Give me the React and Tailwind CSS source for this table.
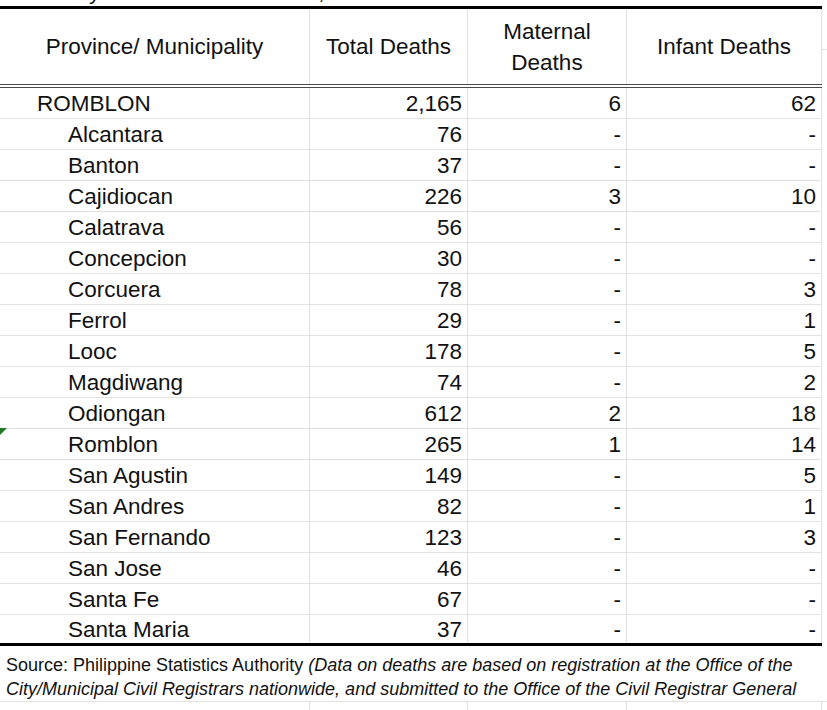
const ROWS = [
  { name: "ROMBLON", total: "2,165", maternal: "6", infant: "62", top: true },
  { name: "Alcantara", total: "76", maternal: "-", infant: "-" },
  { name: "Banton", total: "37", maternal: "-", infant: "-" },
  { name: "Cajidiocan", total: "226", maternal: "3", infant: "10" },
  { name: "Calatrava", total: "56", maternal: "-", infant: "-" },
  { name: "Concepcion", total: "30", maternal: "-", infant: "-" },
  { name: "Corcuera", total: "78", maternal: "-", infant: "3" },
  { name: "Ferrol", total: "29", maternal: "-", infant: "1" },
  { name: "Looc", total: "178", maternal: "-", infant: "5" },
  { name: "Magdiwang", total: "74", maternal: "-", infant: "2" },
  { name: "Odiongan", total: "612", maternal: "2", infant: "18" },
  { name: "Romblon", total: "265", maternal: "1", infant: "14", flag: true },
  { name: "San Agustin", total: "149", maternal: "-", infant: "5" },
  { name: "San Andres", total: "82", maternal: "-", infant: "1" },
  { name: "San Fernando", total: "123", maternal: "-", infant: "3" },
  { name: "San Jose", total: "46", maternal: "-", infant: "-" },
  { name: "Santa Fe", total: "67", maternal: "-", infant: "-" },
  { name: "Santa Maria", total: "37", maternal: "-", infant: "-" },
];

function DataRow({ row, last }) {
  return (
    <div className={`relative flex ${last ? "h-[28px]" : "h-[31px] border-b border-[#e2e2e2]"}`}>
      {row.flag ? (
        <span className="absolute left-0 top-[-1px] h-0 w-0 border-r-[7px] border-t-[7px] border-r-transparent border-t-[#1e7b22]" />
      ) : null}
      <div className={`flex w-[310px] items-center border-r border-[#e2e2e2] pt-[2px] ${row.top ? "pl-[37px]" : "pl-[68px]"}`}>
        {row.name}
      </div>
      <div className="flex w-[158px] items-center justify-end border-r border-[#e2e2e2] pr-[5px] pt-[2px]">{row.total}</div>
      <div className="flex w-[159px] items-center justify-end border-r border-[#e2e2e2] pr-[5px] pt-[2px]">{row.maternal}</div>
      <div className="flex w-[195px] items-center justify-end border-r border-[#e2e2e2] pr-[5px] pt-[2px]">{row.infant}</div>
    </div>
  );
}

export default function App() {
  return (
    <div className="h-[710px] w-[827px] overflow-hidden bg-white font-['Liberation_Sans',Arial,sans-serif] text-[22.5px] leading-none text-[#111]">
      {/* title row above, mostly cropped off */}
      <div className="flex h-[6px] overflow-hidden">
        <span className="ml-[89px] mt-[-19px]">y</span>
        <span className="ml-[218px] mt-[-19px]">,</span>
      </div>
      <div className="h-[3px] w-[822px] bg-black" />

      {/* header */}
      <div className="flex h-[75px] w-[827px]">
        <div className="flex w-[310px] items-center justify-center border-r border-[#e2e2e2] pt-[2px]">Province/ Municipality</div>
        <div className="flex w-[158px] items-center justify-center border-r border-[#e2e2e2] pt-[2px]">Total Deaths</div>
        <div className="flex w-[159px] flex-col items-center justify-center gap-[9px] border-r border-[#e2e2e2] pt-[2px]">
          <span>Maternal</span>
          <span>Deaths</span>
        </div>
        <div className="flex w-[195px] items-center justify-center border-r border-[#e2e2e2] pt-[2px]">Infant Deaths</div>
        <div className="flex-1">
          <div className="h-[41px] border-b border-[#e2e2e2]" />
        </div>
      </div>
      <div className="h-[4px] w-[822px] border-y border-[#4a4a4a]" />

      {/* body */}
      <div className="w-[822px]">
        {ROWS.map((r, i) => (
          <DataRow key={r.name} row={r} last={i === ROWS.length - 1} />
        ))}
      </div>
      <div className="h-[3px] w-[822px] bg-black" />

      {/* source note */}
      <div className="h-[56px] border-b border-[#e2e2e2] pl-[6px] pt-[7px] text-[18px] leading-[24px]">
        Source: Philippine Statistics Authority <i>(Data on deaths are based on registration at the Office of the</i>
        <br />
        <i>City/Municipal Civil Registrars nationwide, and submitted to the Office of the Civil Registrar General</i>
      </div>
      <div className="flex h-[10px]">
        <div className="w-[310px] border-r border-[#e2e2e2]" />
        <div className="w-[158px] border-r border-[#e2e2e2]" />
        <div className="w-[159px] border-r border-[#e2e2e2]" />
        <div className="w-[195px] border-r border-[#e2e2e2]" />
      </div>
    </div>
  );
}
